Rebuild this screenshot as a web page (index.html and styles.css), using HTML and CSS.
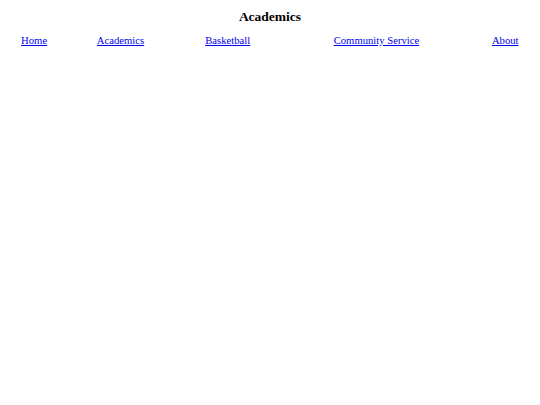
FILE: index.html
```html
<!DOCTYPE html>
<html>
<head>
<meta charset="utf-8">
<link rel="stylesheet" href="styles.css">
</head>
<body>
<h1 class="title">Academics</h1>
<table class="nav">
<tr>
<td><a href="#">Home</a></td>
<td><a href="#">Academics</a></td>
<td><a href="#">Basketball</a></td>
<td><a href="#">Community Service</a></td>
<td><a href="#">About</a></td>
</tr>
</table>
</body>
</html>
```

FILE: styles.css
```css
html, body {
  background: #ffffff;
}
body {
  margin: 0;
  padding: 9px 1.5px 0;
  font-family: "Liberation Serif", "Times New Roman", serif;
  color: #000000;
}
.title {
  margin: 0;
  font-size: 13.5px;
  line-height: 15px;
  font-weight: bold;
  text-align: center;
}
.nav {
  width: 100%;
  margin-top: 7px;
  border-spacing: 2px;
  font-size: 10.67px;
}
.nav td {
  padding: 1px;
  text-align: center;
}
.nav a {
  color: #0000ee;
}
```
